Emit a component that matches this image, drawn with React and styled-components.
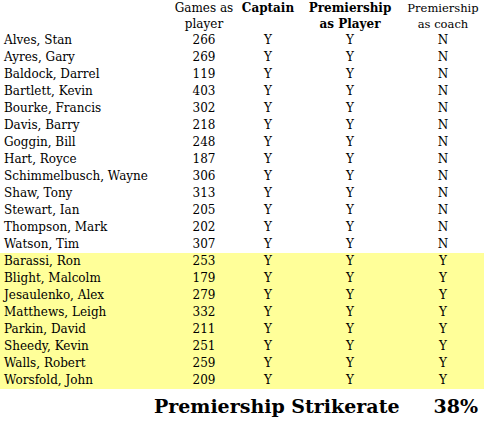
import React from 'react';
import styled, {createGlobalStyle} from 'styled-components';

const GlobalStyle = createGlobalStyle`
  body {
    margin: 0;
    background: #fff;
    font-family: "DejaVu Serif", "Liberation Serif", serif;
    color: #000;
  }
`;

const Page = styled.div`
  width: 484px;
`;

const Table = styled.table`
  width: 484px;
  border-collapse: collapse;
  table-layout: fixed;
  font-size: 12px;
`;

const HeadCell = styled.th`
  width: ${props => props.w}px;
  font-weight: ${props => (props.bold ? 700 : 400)};
  font-size: ${props => (props.small ? '11.5px' : '12px')};
  line-height: 16px;
  text-align: center;
  vertical-align: top;
  padding: 0;
  height: 32px;
`;

const Row = styled.tr`
  background: ${props => (props.coach ? '#ffff99' : 'transparent')};
`;

const NameCell = styled.td`
  height: 17px;
  line-height: 17px;
  padding: 0 0 0 4px;
  white-space: nowrap;
`;

const Cell = styled.td`
  height: 17px;
  line-height: 17px;
  padding: 0;
  text-align: center;
`;

const Footer = styled.div`
  display: flex;
  justify-content: flex-end;
  align-items: baseline;
  gap: 34px;
  padding: 6px 6px 0 0;
  font-size: 19px;
  font-weight: 700;
`;

const players = [
  ['Alves, Stan', 266, 'N'],
  ['Ayres, Gary', 269, 'N'],
  ['Baldock, Darrel', 119, 'N'],
  ['Bartlett, Kevin', 403, 'N'],
  ['Bourke, Francis', 302, 'N'],
  ['Davis, Barry', 218, 'N'],
  ['Goggin, Bill', 248, 'N'],
  ['Hart, Royce', 187, 'N'],
  ['Schimmelbusch, Wayne', 306, 'N'],
  ['Shaw, Tony', 313, 'N'],
  ['Stewart, Ian', 205, 'N'],
  ['Thompson, Mark', 202, 'N'],
  ['Watson, Tim', 307, 'N'],
  ['Barassi, Ron', 253, 'Y'],
  ['Blight, Malcolm', 179, 'Y'],
  ['Jesaulenko, Alex', 279, 'Y'],
  ['Matthews, Leigh', 332, 'Y'],
  ['Parkin, David', 211, 'Y'],
  ['Sheedy, Kevin', 251, 'Y'],
  ['Walls, Robert', 259, 'Y'],
  ['Worsfold, John', 209, 'Y'],
];

const App = () => {
  return (
    <Page>
      <GlobalStyle />
      <Table>
        <thead>
          <tr>
            <HeadCell w={170}></HeadCell>
            <HeadCell w={68}>Games as<br />player</HeadCell>
            <HeadCell w={60} bold>Captain</HeadCell>
            <HeadCell w={104} bold>Premiership<br />as Player</HeadCell>
            <HeadCell w={82} small>Premiership<br />as coach</HeadCell>
          </tr>
        </thead>
        <tbody>
          {players.map(([name, games, coach]) => (
            <Row key={name} coach={coach === 'Y'}>
              <NameCell>{name}</NameCell>
              <Cell>{games}</Cell>
              <Cell>Y</Cell>
              <Cell>Y</Cell>
              <Cell>{coach}</Cell>
            </Row>
          ))}
        </tbody>
      </Table>
      <Footer>
        <span>Premiership Strikerate</span>
        <span>38%</span>
      </Footer>
    </Page>
  );
};

export default App;
